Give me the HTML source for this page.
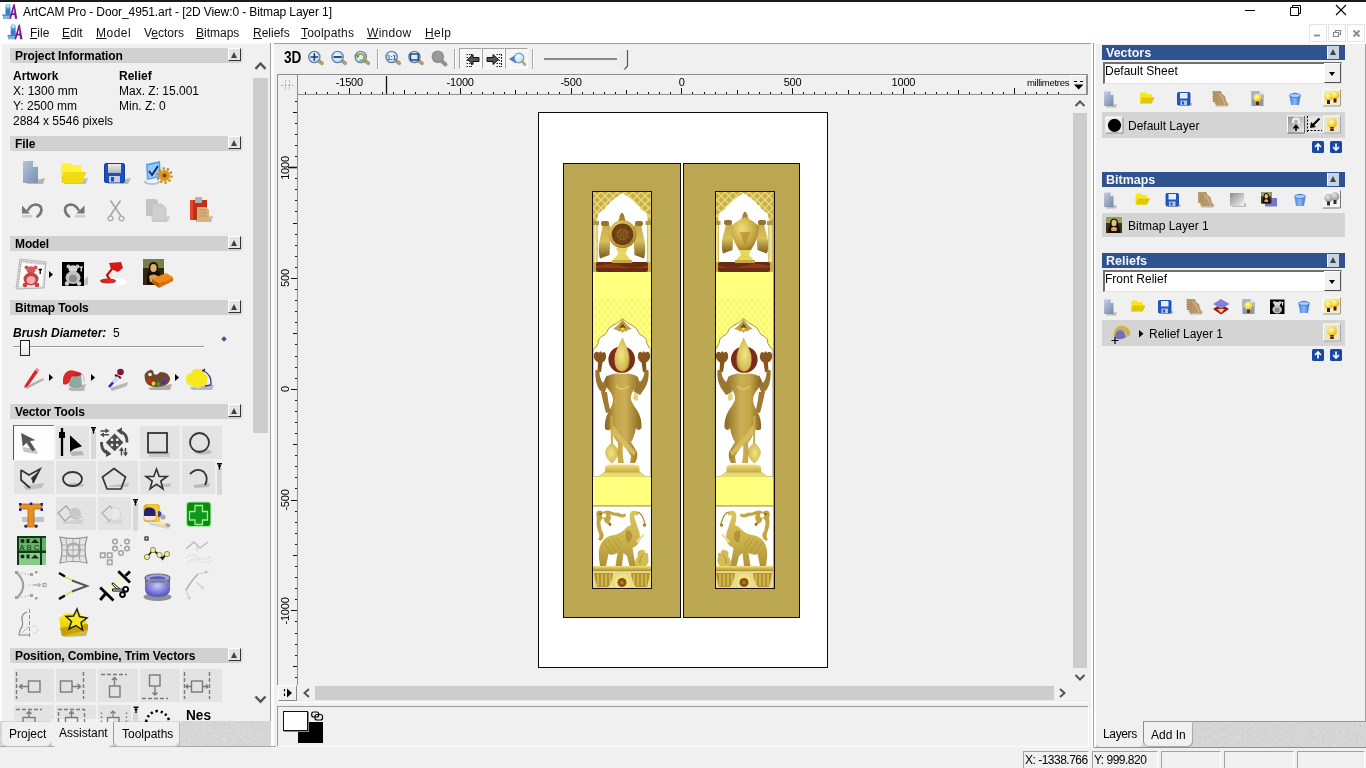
<!DOCTYPE html>
<html><head><meta charset="utf-8">
<style>
*{box-sizing:border-box;margin:0;padding:0}
html,body{width:1366px;height:768px;overflow:hidden;background:#f0f0f0;font-family:"Liberation Sans",sans-serif;font-size:12px;color:#000}
.a{position:absolute}
.t{position:absolute;white-space:nowrap;line-height:1}
#title{left:0;top:0;width:1366px;height:43px;background:#fff}
#topbar{left:0;top:0;width:1366px;height:2px;background:#1b1b1b}
.menu{font-size:12px;top:27px;color:#111}
.menu u{text-decoration-thickness:1px;text-underline-offset:1px}
.hd{position:absolute;left:10px;width:233px;height:15px;background:linear-gradient(90deg,#d6d6d6 0,#d1d1d1 8px,#d1d1d1 231px,#e2e2e2 231px)}
.hd b{position:absolute;left:5px;top:1px;font-size:12px;line-height:14px;white-space:nowrap;letter-spacing:-0.12px}
.cb{position:absolute;width:13px;height:13px;background:#e4e4e4;border-right:1px solid #333;border-bottom:1px solid #333;border-left:1px solid #fff;border-top:1px solid #fff}
.cb:after{content:"";position:absolute;left:2px;top:2.5px;border-left:3.5px solid transparent;border-right:3.5px solid transparent;border-bottom:6.5px solid #3c4444}
.bh{position:absolute;left:1102px;width:243px;height:15px;background:#30538f}
.bh b{position:absolute;left:4px;top:1px;font-size:12.5px;line-height:15px;color:#f4f6fa;white-space:nowrap}
.bh .cb{left:225px;top:1px;background:#c9d3e3;border:none;border-left:1px solid #f0f4fa;width:12px;height:12.5px}
.row{position:absolute;left:1102px;width:243px;height:25px;background:#d4d4d4}
.sel{position:absolute;left:1103px;width:239px;height:22px;background:#fff;border-top:2px solid #707070;border-left:2px solid #707070;border-right:1px solid #e2e2e2;border-bottom:1px solid #e2e2e2}
.sel span{position:absolute;left:0px;top:0px;font-size:12px;line-height:14px}
.sel i{position:absolute;right:0;top:-1px;width:17px;height:20px;background:#f0f0f0;border-right:1px solid #505050;border-bottom:1px solid #505050;border-left:1px solid #fff;border-top:1px solid #fff}
.sel i:after{content:"";position:absolute;left:4px;top:8px;border-left:3.5px solid transparent;border-right:3.5px solid transparent;border-top:4px solid #000}
.tile{position:absolute;width:38px;height:32px;background:#e3e3e3}
</style></head><body><div id="root" style="position:absolute;left:0;top:0;width:1366px;height:768px;will-change:transform;transform:translateZ(0)">
<!-- TITLE + MENU -->
<div id="title" class="a"></div>
<div id="topbar" class="a"></div>
<div class="t" style="left:23px;top:5px;font-size:12px;line-height:15px;color:#000;letter-spacing:-0.1px">ArtCAM Pro - Door_4951.art - [2D View:0 - Bitmap Layer 1]</div>
<div class="t menu" style="left:30px"><u>F</u>ile</div>
<div class="t menu" style="left:62px"><u>E</u>dit</div>
<div class="t menu" style="left:96px;letter-spacing:.5px"><u>M</u>odel</div>
<div class="t menu" style="left:144px">V<u>e</u>ctors</div>
<div class="t menu" style="left:196px"><u>B</u>itmaps</div>
<div class="t menu" style="left:253px"><u>R</u>eliefs</div>
<div class="t menu" style="left:301px;letter-spacing:.2px"><u>T</u>oolpaths</div>
<div class="t menu" style="left:367px;letter-spacing:.3px"><u>W</u>indow</div>
<div class="t menu" style="left:425px;letter-spacing:.4px"><u>H</u>elp</div>
<div class="a" style="left:1365px;top:43px;width:1px;height:679px;background:#a0a0a0"></div>
<!-- FRAMES -->
<div class="a" style="left:0;top:43px;width:1366px;height:1px;background:#fafafa"></div>
<div class="a" style="left:270px;top:43px;width:1px;height:704px;background:#a0a0a0"></div>
<div class="a" style="left:271px;top:43px;width:3px;height:704px;background:#fdfdfd"></div>
<div class="a" style="left:274px;top:43px;width:817px;height:1px;background:#a0a0a0"></div>
<div class="a" style="left:1091px;top:43px;width:2px;height:704px;background:#fdfdfd"></div>
<div class="a" style="left:1093px;top:43px;width:1px;height:704px;background:#a0a0a0"></div>
<div class="a" style="left:1094px;top:43px;width:2px;height:704px;background:#fdfdfd"></div>
<!-- TITLE ICONS -->
<svg class="a" style="left:0;top:0" width="1366" height="44" viewBox="0 0 1366 44">
<defs>
<linearGradient id="lgb" x1="0" y1="0" x2="0" y2="1"><stop offset="0" stop-color="#78c8e8"/><stop offset=".5" stop-color="#3878c8"/><stop offset="1" stop-color="#4090d8"/></linearGradient>
<g id="logo"><path d="M3.200,2Q3.200,0 5.700,0Q8.200,0 8.200,2V10.300H9V12H8.500V15H.8V12.300H0V10.800H3.200Z" fill="url(#lgb)"/><ellipse cx="5.700" cy="2.300" rx="1.500" ry="1.700" fill="#b8ecf8"/><path d="M1,12.600H8.200M1.500,14H8" stroke="#a8dcf0" stroke-width=".8"/><path d="M12.300,0L15,15H12.600L12.200,11.300H9.800L8.600,15H7L11,.8Z" fill="#7a1890"/><path d="M10.300,9.500L11.700,4.500L12,9.500Z" fill="#fff"/></g>
</defs>
<use href="#logo" x="2.300" y="3.700"/>
<use href="#logo" x="7.500" y="24.300"/>
<path d="M1245,10.500H1255" stroke="#000" stroke-width="1"/>
<path d="M1290.500,7.500H1298.500V15.500H1290.500Z M1292.500,7.500V5.500H1300.500V13.500H1298.500" fill="none" stroke="#000" stroke-width="1"/>
<path d="M1336,5L1346,15M1346,5L1336,15" stroke="#000" stroke-width="1.100"/>
<g fill="#fdfdfd" stroke="#e4e4e4" stroke-width="1"><rect x="1309.500" y="24.500" width="17" height="17"/><rect x="1328.500" y="24.500" width="17" height="17"/><rect x="1347.500" y="24.500" width="17" height="17"/></g>
<path d="M1314,35.500H1320" stroke="#8a8a8a" stroke-width="1.800"/>
<path d="M1333.500,32.500H1338.500V36.500H1333.500ZM1335.500,32V30.500H1340.500V34.500H1339" fill="none" stroke="#8a8a8a" stroke-width="1.200"/>
<path d="M1353.500,30.500L1359.500,36.500M1359.500,30.500L1353.500,36.500" stroke="#8a8a8a" stroke-width="1.800"/>
</svg>
<!-- LEFT PANEL -->
<div class="a" style="left:0;top:44px;width:2px;height:703px;background:#fcfcfc"></div>
<div class="hd" style="top:48px"><b>Project Information</b></div><div class="cb" style="left:228px;top:48px"></div>
<div class="hd" style="top:136px"><b>File</b></div><div class="cb" style="left:228px;top:136px"></div>
<div class="hd" style="top:236px"><b>Model</b></div><div class="cb" style="left:228px;top:236px"></div>
<div class="hd" style="top:300px"><b>Bitmap Tools</b></div><div class="cb" style="left:228px;top:300px"></div>
<div class="hd" style="top:404px"><b>Vector Tools</b></div><div class="cb" style="left:228px;top:404px"></div>
<div class="hd" style="top:648px"><b>Position, Combine, Trim Vectors</b></div><div class="cb" style="left:228px;top:648px"></div>
<div class="t" style="left:13px;top:69px;line-height:15px"><b>Artwork</b><br>X: 1300 mm<br>Y: 2500 mm<br>2884 x 5546 pixels</div>
<div class="t" style="left:119px;top:69px;line-height:15px"><b>Relief</b><br>Max. Z: 15.001<br>Min. Z: 0</div>
<div class="t" style="left:13px;top:326px;line-height:14px"><b><i>Brush Diameter:</i></b></div>
<div class="t" style="left:113px;top:326px;line-height:14px">5</div>
<div class="a" style="left:13px;top:346px;width:191px;height:1px;background:#9a9a9a"></div>
<div class="a" style="left:13px;top:347px;width:191px;height:1px;background:#fff"></div>
<div class="a" style="left:20px;top:340px;width:10px;height:16px;background:linear-gradient(#fff,#e8e8e8);border:1px solid #222"></div>
<div class="a" style="left:222px;top:337px;width:4px;height:4px;background:#4a5a7a;transform:rotate(45deg)"></div>
<!-- left scrollbar -->
<div class="a" style="left:253px;top:78px;width:15px;height:355px;background:#cdcdcd"></div>
<svg class="a" style="left:252px;top:56px" width="18" height="654" viewBox="252 56 18 654"><path d="M255.500,68.800 L260.500,63.500 L265.500,68.800" fill="none" stroke="#555" stroke-width="2.500"/><path d="M255.500,696.500 L260.500,701.800 L265.500,696.500" fill="none" stroke="#555" stroke-width="2.500"/></svg>
<!-- tiles -->
<div class="a" style="left:13px;top:425px;width:41px;height:35px;background:#fdfdfd;border-left:1px solid #555;border-top:1px solid #777"></div>
<div class="tile" style="left:56px;top:426px;width:33px;height:33px"></div><div class="a" style="left:91px;top:432px;width:5px;height:27px;background:#d8d8d8"></div>
<div class="tile" style="left:140px;top:426px;width:40px;height:33px"></div>
<div class="tile" style="left:182px;top:426px;width:40px;height:33px"></div>
<div class="tile" style="left:14px;top:461px;width:40px;height:33px"></div>
<div class="tile" style="left:56px;top:461px;width:40px;height:33px"></div>
<div class="tile" style="left:98px;top:461px;width:40px;height:33px"></div>
<div class="tile" style="left:140px;top:461px;width:40px;height:33px"></div>
<div class="tile" style="left:182px;top:461px;width:33px;height:33px"></div><div class="a" style="left:217px;top:468px;width:5px;height:27px;background:#d8d8d8"></div>
<div class="tile" style="left:56px;top:497px;width:40px;height:33px"></div>
<div class="tile" style="left:98px;top:497px;width:33px;height:33px"></div><div class="a" style="left:133px;top:504px;width:5px;height:27px;background:#d8d8d8"></div>
<div class="tile" style="left:14px;top:669px;width:40px;height:33px"></div>
<div class="tile" style="left:56px;top:669px;width:40px;height:33px"></div>
<div class="tile" style="left:98px;top:669px;width:40px;height:33px"></div>
<div class="tile" style="left:140px;top:669px;width:40px;height:33px"></div>
<div class="tile" style="left:182px;top:669px;width:40px;height:33px"></div>
<div class="tile" style="left:14px;top:705px;width:40px;height:20px"></div>
<div class="tile" style="left:56px;top:705px;width:40px;height:20px"></div>
<div class="tile" style="left:98px;top:705px;width:33px;height:20px"></div><div class="a" style="left:133px;top:712px;width:5px;height:12px;background:#d8d8d8"></div>
<!--LEFTICONS-->
<!-- tab strip -->
<div class="a" style="left:0;top:721px;width:271px;height:26px;background:#d9d9d9"></div><svg class="a" style="left:0;top:721px" width="271" height="26"><filter id="nz2"><feTurbulence type="fractalNoise" baseFrequency=".35" numOctaves="2" seed="7"/><feColorMatrix type="matrix" values="0 0 0 0 .5  0 0 0 0 .5  0 0 0 0 .5  0 0 0 1.500 -.5"/></filter><rect width="271" height="26" filter="url(#nz2)" opacity=".4"/></svg>
<div class="a" style="left:0;top:746px;width:276px;height:1px;background:#a8a8a8"></div>
<div class="a" style="left:2px;top:722px;width:49px;height:24px;background:#f0f0f0;border-radius:0 0 5px 5px;box-shadow:1px 1px 0 #bbb"></div>
<div class="a" style="left:113px;top:722px;width:66px;height:24px;background:#f0f0f0;border-radius:0 0 5px 5px;border-left:1px solid #999;box-shadow:1px 1px 0 #bbb"></div>
<div class="a" style="left:51px;top:719px;width:62px;height:28px;background:#f0f0f0;border-radius:0 0 5px 5px"></div>
<div class="t" style="left:9px;top:727px;font-size:12px;line-height:15px">Project</div>
<div class="t" style="left:59px;top:726px;font-size:12px;line-height:15px">Assistant</div>
<div class="t" style="left:122px;top:727px;font-size:12px;line-height:15px">Toolpaths</div>
<!-- LEFT ICONS -->
<svg class="a" style="left:0;top:150px" width="252" height="572" viewBox="0 150 252 572">
<defs>
<filter id="bl" x="-20%" y="-20%" width="140%" height="140%"><feGaussianBlur stdDeviation=".6"/></filter>
<filter id="bl2" x="-30%" y="-30%" width="160%" height="160%"><feGaussianBlur stdDeviation="1.2"/></filter>
<linearGradient id="docg" x1="0" y1="0" x2="1" y2="1"><stop offset="0" stop-color="#b4c4dc"/><stop offset="1" stop-color="#7c8eae"/></linearGradient>
<linearGradient id="yel" x1="0" y1="0" x2="0" y2="1"><stop offset="0" stop-color="#fff020"/><stop offset="1" stop-color="#d8b800"/></linearGradient>
<linearGradient id="gry" x1="0" y1="0" x2="0" y2="1"><stop offset="0" stop-color="#eee"/><stop offset="1" stop-color="#b4b4b4"/></linearGradient>
<radialGradient id="blu" cx=".5" cy=".4" r=".6"><stop offset="0" stop-color="#c8c8ff"/><stop offset="1" stop-color="#5050c0"/></radialGradient>
<path id="tri" d="M0,0V7L4,3.500Z" fill="#000"/>
<g id="pin"><path d="M0,.7H5M2.500,0V6.500M1,3H4" stroke="#000" stroke-width="1.400" fill="none"/></g>
</defs>
<!-- File row 1 -->
<g>
<path d="M27,182L45,178L43,184H27Z" fill="#909090" opacity=".6" filter="url(#bl)"/>
<path d="M23,161H33L38,167V183H23Z" fill="url(#docg)"/><path d="M33,161L38,167H33Z" fill="#e8eef8"/>
<path d="M64,181L88,178L86,184H64Z" fill="#909090" opacity=".5" filter="url(#bl)"/>
<path d="M61,165Q61,163 63,163H70L72,165H79Q81,165 81,168V172H86L82,183H62Z" fill="url(#yel)"/><path d="M64,172H86L82,183H62Z" fill="#f0dc10"/><path d="M61,165Q61,163 63,163H70L72,165H79Q81,165 81,168V172H64L61,181Z" fill="#fff238"/>
<path d="M108,182L131,178L128,184H108Z" fill="#909090" opacity=".6" filter="url(#bl)"/>
<rect x="104.500" y="163.500" width="20" height="19" rx="1.500" fill="#1c50c0" stroke="#1040a0"/><rect x="108" y="164" width="13" height="9" fill="url(#gry)"/><rect x="109" y="176" width="11" height="6.500" fill="#c8d0e0"/><rect x="111" y="177" width="3" height="4.500" fill="#1c50c0"/>
<ellipse cx="152" cy="182" rx="8" ry="3" fill="#b8c0e0"/><ellipse cx="152" cy="181" rx="6" ry="2" fill="#f4f4fc"/>
<path d="M146,164L160,161L161,177L147,180Z" fill="#58a0e0"/><path d="M147.500,165.500L158.500,163L159.500,176L148.500,178.500Z" fill="#90c8f8"/><path d="M149,171L152,175L158,166" stroke="#102080" stroke-width="1.800" fill="none"/>
<circle cx="164.500" cy="175.500" r="5.500" fill="#d89820"/><circle cx="164.500" cy="175.500" r="7" fill="none" stroke="#c88818" stroke-width="2.500" stroke-dasharray="2.200 2.200"/><circle cx="164.500" cy="175.500" r="2" fill="#704808"/>
</g>
<!-- File row 2 -->
<g>
<path d="M22,215H32V217.500H22Z" fill="#c4c4c4" opacity=".8" filter="url(#bl)"/>
<path d="M22,205.500V213.500H30Z" fill="#757575"/><path d="M28,210Q31,204.500 36,204.500Q41.500,205 41.500,210Q41,214 37.500,216.500" fill="none" stroke="#757575" stroke-width="2.600" stroke-linecap="round"/>
<path d="M75,215H85V217.500H75Z" fill="#c4c4c4" opacity=".8" filter="url(#bl)"/>
<path d="M84.500,205.500V213.500H76.500Z" fill="#757575"/><path d="M78.500,210Q75.500,204.500 70.500,204.500Q65,205 65,210Q65.500,214 69,216.500" fill="none" stroke="#757575" stroke-width="2.600" stroke-linecap="round"/>
<path d="M110.500,200.500L121,216M120.500,200.500L110,216" stroke="#a4a4a4" stroke-width="1.500" fill="none"/><ellipse cx="110.500" cy="218.500" rx="2.500" ry="2.200" fill="none" stroke="#a4a4a4" stroke-width="1.200" transform="rotate(-30 110.500 218.500)"/><ellipse cx="121.500" cy="218.500" rx="2.500" ry="2.200" fill="none" stroke="#a4a4a4" stroke-width="1.200" transform="rotate(30 121.500 218.500)"/>
<path d="M152,219L170,216L168,222H152Z" fill="#c0c0c0" opacity=".7" filter="url(#bl)"/>
<path d="M146,199H156L158,201V216H146Z" fill="#c4c4c4"/><path d="M152,204H162L166,208V221H152Z" fill="#cfcfcf" stroke="#bcbcbc" stroke-width=".6"/>
<path d="M196,219L213,216L211,222H196Z" fill="#b0a090" opacity=".7" filter="url(#bl)"/>
<path d="M190,200H207V220H190Z" fill="#c03018"/><path d="M190,200H193V220H190Z" fill="#e04828"/><path d="M195,197H202V203H195Z" fill="#b0b0b8"/><path d="M197,207H206L209,210V221H197Z" fill="#d8b078"/><path d="M199,210H206M199,213H207M199,216H207" stroke="#b89058" stroke-width=".8"/>
</g>
<!-- Model row -->
<g>
<path d="M20,259L46,262L44,288L16,289Z" fill="#e0e0e0" stroke="#a8a8a8" stroke-width=".8"/><path d="M22,263L44,265.500L42,286L19,286.500Z" fill="#fff"/>
<path d="M21,261L45,264M18,287L21,262" stroke="#888" stroke-width="1" stroke-dasharray="1 1.500"/>
<circle cx="26.500" cy="267.500" r="2" fill="#d05050"/><circle cx="35.500" cy="267.500" r="2" fill="#d05050"/><ellipse cx="31" cy="270" rx="4.500" ry="3.800" fill="#d85858"/>
<ellipse cx="31" cy="279" rx="7.500" ry="6.500" fill="#c84040"/><ellipse cx="31" cy="280" rx="4.500" ry="4" fill="#f0b0b0"/><circle cx="25" cy="285" r="2.300" fill="#c84040"/><circle cx="37" cy="285" r="2.300" fill="#c84040"/>
<path d="M38.500,269.500H42M40.200,269.500V274" stroke="#000" stroke-width="1.300"/>
<use href="#tri" x="49" y="271"/>
<path d="M84,280L88,276V285H84Z" fill="#a0a0a0" opacity=".6"/>
<rect x="62" y="262" width="22" height="24" fill="#000"/>
<circle cx="68.500" cy="266.500" r="2" fill="#c8c8c8"/><circle cx="77.500" cy="266.500" r="2" fill="#c8c8c8"/><ellipse cx="73" cy="269" rx="4.500" ry="3.800" fill="#d8d8d8"/>
<ellipse cx="73" cy="277.500" rx="7.500" ry="6.500" fill="#c4c4c4"/><ellipse cx="73" cy="278.500" rx="4" ry="3.800" fill="#8c8c8c"/><circle cx="67" cy="283.500" r="2.200" fill="#d0d0d0"/><circle cx="79" cy="283.500" r="2.200" fill="#d0d0d0"/>
<path d="M79.500,267H83M81.200,267V271.500" stroke="#fff" stroke-width="1.200"/>
<ellipse cx="115" cy="282" rx="12" ry="3.500" fill="#fff" filter="url(#bl)"/><ellipse cx="108" cy="281" rx="8" ry="2.500" fill="#d02020" filter="url(#bl)"/>
<path d="M109,263L121,262L123,268L118,272L111,269Z" fill="#d81818"/><path d="M112,269L107,275L110,280" stroke="#c01010" stroke-width="2.200" fill="none"/><ellipse cx="110" cy="281" rx="5" ry="2" fill="#e02828"/>
<rect x="143" y="259" width="21" height="26" fill="#302810"/><path d="M143,259H164V268H143Z" fill="#788048"/><path d="M147,285Q146,274 149,270Q148,262 153.500,262Q159,262 158,270Q161,274 160,285Z" fill="#181008"/><ellipse cx="153.500" cy="268" rx="3.200" ry="4" fill="#e0b070"/><path d="M149,276Q153.500,273 158,276L157,282H150Z" fill="#d0a060"/>
<path d="M152,279L166,273L173,277L159,284Z" fill="#f08818"/><path d="M152,279L159,284V288L152,283Z" fill="#b85c08"/><path d="M159,284L173,277V281L159,288Z" fill="#d87410"/>
</g>
<!-- Bitmap tools row -->
<g>
<path d="M25,387L43,378L44,380L27,389Z" fill="#a0a0a0" opacity=".8" filter="url(#bl)"/>
<path d="M25,385L35,370L38,372L28,386L24,388Z" fill="#e02030"/><path d="M35,370L36.500,368L39.500,370L38,372Z" fill="#f08088"/>
<use href="#tri" x="49" y="374"/>
<path d="M68,388L86,384L84,391H70Z" fill="#909090" opacity=".6" filter="url(#bl)"/>
<path d="M69,374L81,373L82,386Q76,390 69,386Z" fill="#90a8a0"/><ellipse cx="75" cy="374" rx="6.500" ry="2.500" fill="#c82020"/><path d="M63,384Q62,374 68,371Q74,369 78,373Q72,374 70,380Q68,386 63,384Z" fill="#d82828"/><path d="M79,372Q85,374 84,382" stroke="#b0b8b8" stroke-width="1" fill="none"/>
<use href="#tri" x="91" y="374"/>
<path d="M110,388L128,382L127,386L112,391Z" fill="#a0a0a0" opacity=".7" filter="url(#bl)"/>
<circle cx="120.500" cy="372" r="3.300" fill="#801838"/><path d="M115,375L121,378" stroke="#601028" stroke-width="2"/><path d="M117,378L109,387" stroke="#2030b0" stroke-width="2.600"/><path d="M118,377L113,382.500" stroke="#e0e8ff" stroke-width="2.400"/>
<path d="M148,388L172,384L170,390H150Z" fill="#808080" opacity=".6" filter="url(#bl)"/>
<path d="M145,380Q143,372 150,370Q153,369 154,374Q157,376 160,372Q170,372 170,380Q168,387 156,387Q147,387 145,380Z" fill="#704828"/><circle cx="150" cy="374.500" r="1.800" fill="#f0f0f0"/>
<circle cx="149" cy="381" r="1.900" fill="#e02020"/><circle cx="153.500" cy="383.500" r="1.900" fill="#f0d020"/><circle cx="158.500" cy="384" r="1.900" fill="#30a030"/><circle cx="163.500" cy="382.500" r="1.900" fill="#2040d0"/><circle cx="166" cy="378" r="1.700" fill="#8030a0"/>
<use href="#tri" x="175" y="374"/>
<path d="M190,387L214,385L212,390H192Z" fill="#9090a8" opacity=".6" filter="url(#bl)"/>
<path d="M186,379Q186,373 192,373Q193,368 199,369Q204,369 205,374Q209,376 207,381Q208,386 202,386Q198,390 193,386Q186,386 186,379Z" fill="#f8e820"/>
<path d="M202,370Q212,374 211,385L205,386" stroke="#303890" stroke-width="1.300" fill="none"/><path d="M203,371L205,369" stroke="#111" stroke-width="1.200"/>
</g>
<!-- Vector tools row1 -->
<g>
<path d="M22,447L36,449L38,454L24,452Z" fill="#b0b0b0" opacity=".7" filter="url(#bl)"/>
<path d="M21.500,433.500L23,446L26.500,442.500L32.500,451L35,449.500L29.500,441L34.500,440Z" fill="#555" stroke="#3a3a3a" stroke-width=".5"/>
<path d="M70,452L82,451L84,455L72,456Z" fill="#a8a8a8" opacity=".8" filter="url(#bl)"/>
<path d="M62,428V456" stroke="#000" stroke-width="2.300"/><rect x="59" y="432" width="6" height="6" fill="#000"/>
<path d="M70,435.200V452L74,449L82,446.300Z" fill="#000"/>
<use href="#pin" x="91" y="427"/>
<path d="M114.600,433.600L123.400,442.400L114.600,451.200L105.800,442.400Z" fill="#4a4a4a"/><g fill="#f4f4f4"><rect x="110.800" y="438.600" width="2.400" height="2.400"/><rect x="116" y="438.600" width="2.400" height="2.400"/><rect x="110.800" y="443.800" width="2.400" height="2.400"/><rect x="116" y="443.800" width="2.400" height="2.400"/></g>
<path d="M127,442.500Q127.500,434 120.500,431.500" fill="none" stroke="#4a4a4a" stroke-width="2.800"/><path d="M116.500,430.500L122,427.500V435Z" fill="#4a4a4a"/>
<path d="M101.500,442Q101,450.500 107.500,453" fill="none" stroke="#4a4a4a" stroke-width="2.800"/><path d="M111.500,454L106,457V449.500Z" fill="#4a4a4a"/>
<path d="M100.500,431H106.500M103,434.800H109" stroke="#4a4a4a" stroke-width="1.500"/><path d="M105.500,428.300L109.500,431L105.500,433.300Z M104,432.500L100,434.800L104,437.300Z" fill="#4a4a4a"/>
<path d="M121.500,450V455.500M125.500,448V453.500" stroke="#4a4a4a" stroke-width="1.500"/><path d="M119,451L121.500,447L124,451Z M123,452.500L125.500,456.500L128,452.500Z" fill="#4a4a4a"/>
<path d="M149,452H170V457H149Z" fill="#c4c4c4" opacity=".8" filter="url(#bl)"/>
<rect x="148" y="433" width="19" height="19.500" fill="none" stroke="#333" stroke-width="1.800"/>
<ellipse cx="203" cy="452" rx="9" ry="2.500" fill="#bdbdbd" filter="url(#bl)"/>
<circle cx="199.500" cy="442.500" r="9.500" fill="none" stroke="#333" stroke-width="1.800"/>
</g>
<!-- row2 -->
<g>
<path d="M23,486L44,483L42,488L26,490Z" fill="#bdbdbd" opacity=".9" filter="url(#bl)"/>
<path d="M21,470L29,475L40,469L33,483M21,470V480L30,488" fill="none" stroke="#333" stroke-width="1.700"/><path d="M40,469L32,484L34.500,479Z" fill="#333"/><path d="M38,472L33,483L31,478Z" fill="#333"/>
<ellipse cx="75" cy="485" rx="9" ry="2.200" fill="#bdbdbd" filter="url(#bl)"/>
<ellipse cx="72.500" cy="479" rx="9.500" ry="7" fill="none" stroke="#333" stroke-width="1.800"/>
<path d="M108,486L129,483L128,487H110Z" fill="#bdbdbd" opacity=".9" filter="url(#bl)"/>
<path d="M114,468.500L125.500,477L121,489H107L102.500,477Z" fill="none" stroke="#333" stroke-width="1.700"/>
<path d="M150,486L171,483L170,487H152Z" fill="#bdbdbd" opacity=".9" filter="url(#bl)"/>
<path d="M156.500,469L159.200,476.500H167L160.800,481L163,489L156.500,484.200L150,489L152.200,481L146,476.500H153.800Z" fill="none" stroke="#333" stroke-width="1.600"/>
<path d="M193,485L210,483L209,487L195,488Z" fill="#b4b4b4" opacity=".9" filter="url(#bl)"/>
<path d="M190,474Q197,467 204,472Q209,478 205,485" fill="none" stroke="#333" stroke-width="1.800"/>
<use href="#pin" x="217" y="463"/>
</g>
<!-- row3 -->
<g>
<path d="M22,517H44V522H22Z" fill="#b8b8b8" opacity=".8" filter="url(#bl)"/>
<path d="M20,504H42V509H34V525H37V527H25V525H28V509H20Z" fill="#e89020" stroke="#a05808" stroke-width=".7"/>
<g fill="#1818a0"><rect x="19" y="503" width="2.500" height="2.500"/><rect x="40.500" y="503" width="2.500" height="2.500"/><rect x="19" y="508.500" width="2.500" height="2.500"/><rect x="40.500" y="508.500" width="2.500" height="2.500"/><rect x="24.500" y="525" width="2.500" height="2.500"/><rect x="35" y="525" width="2.500" height="2.500"/><rect x="29.800" y="502.500" width="2.500" height="2.500"/></g>
<path d="M62,522L84,519L82,524H64Z" fill="#cfcfcf" opacity=".9" filter="url(#bl)"/>
<path d="M58,513L66,506L73,514L65,521Z" fill="none" stroke="#a8a8a8" stroke-width="1.300"/><ellipse cx="75" cy="513" rx="6" ry="5" fill="#c8c8c8"/><path d="M70,516Q76,522 82,516" stroke="#b0b0b0" fill="none"/>
<path d="M104,522L124,519L122,524H106Z" fill="#d6d6d6" opacity=".9" filter="url(#bl)"/>
<path d="M102,513L110,506L117,514L109,521Z" fill="none" stroke="#b4b4b4" stroke-width="1.300"/><path d="M112,508Q121,506 121,516Q119,522 111,520" fill="#e8e8e8" stroke="#d0d0d0"/>
<use href="#pin" x="133" y="499"/>
<path d="M147,522L168,526L169,529L150,525Z" fill="#c8c8c8" opacity=".7" filter="url(#bl)"/>
<path d="M156,519.500L170,524.500L169,527L155,522.500Z" fill="#f4e890"/><path d="M166,523L170.500,524.500L169.500,527.500L165.500,526Z" fill="#a0a0a0"/>
<rect x="143.500" y="504" width="16.500" height="18" rx="3.500" fill="#e8b020"/><path d="M146,504.500H156Q160,505 160,509V518Q160,522 156,522Z" fill="#f0c838"/>
<path d="M144,512Q144,507.500 149,507.500Q155,507.500 155.500,512V516H144Z" fill="#282068"/><path d="M144,516H155.500V518Q155,520.500 150,520.500Q144.500,520.500 144,518Z" fill="#f0e0e4"/>
<path d="M158,511Q161.500,511 161.500,514Q161.500,517 158,517Z" fill="#4838a0"/><circle cx="163" cy="517" r="2.600" fill="#a8a8a8"/>
<rect x="186.500" y="502" width="24.500" height="24.500" rx="3" fill="#0c8a0c" stroke="#a8f0a8" stroke-width="1.200"/>
<path d="M195,505.500H202.500V511.500H207.500V520H202.500V524.500H195V520H189.500V511.500H195Z" fill="#12981a" stroke="#98f098" stroke-width="1.300"/>
</g>
<!-- row4 -->
<g>
<rect x="17" y="536" width="29" height="29" fill="#0c3c14"/><rect x="19" y="538" width="21" height="12.500" fill="#68b068"/><rect x="19" y="553" width="21" height="12" fill="#88c888"/><rect x="42" y="538" width="4" height="12.500" fill="#68b068"/><rect x="42" y="553" width="4" height="12" fill="#88c888"/>
<circle cx="22.500" cy="541" r="2" fill="#082808"/><rect x="26.500" y="539" width="3" height="4" fill="#082808"/><path d="M31,543L35,539L39,543Z" fill="#082808"/>
<text x="19.500" y="550" font-size="7.500" font-family="Liberation Sans" fill="#0c3010" textLength="20">ABC</text>
<circle cx="22.500" cy="556.500" r="2" fill="#0c3010"/><rect x="26.500" y="554.500" width="3" height="4" fill="#0c3010"/><path d="M31,558.500L35,554.500L39,558.500Z" fill="#0c3010"/>
<path d="M60,537Q73,540 87,537Q83,550 87,563Q73,560 60,563Q64,550 60,537Z" fill="#e4e4e4" stroke="#909090" stroke-width="1.200"/><path d="M66,538.500Q69,550 66,561.500M73,539V561M80,538.500Q77,550 80,561.500M62,545H85M62.500,550H84.500M62,556H85" stroke="#a0a0a0" stroke-width=".9" fill="none"/><circle cx="73.500" cy="550" r="6.500" fill="none" stroke="#a8a8a8" stroke-width="2"/>
<g fill="none" stroke="#a0a0a0" stroke-width="1.500"><rect x="100.500" y="553" width="4.500" height="4.500"/><rect x="107.500" y="553" width="4.500" height="4.500"/><rect x="107.500" y="560" width="4.500" height="4.500"/><circle cx="115" cy="541.500" r="2.300"/><circle cx="127" cy="541.500" r="2.300"/><circle cx="115" cy="548.500" r="2.300"/><circle cx="127" cy="548.500" r="2.300"/><circle cx="121" cy="553" r="2.300"/></g><circle cx="121" cy="545.500" r="1" fill="#a0a0a0"/>
<rect x="145" y="537" width="3" height="3" fill="#fff" stroke="#000" stroke-width="1"/>
<path d="M147,557L153,550L159,555L162,558L167,554" fill="none" stroke="#222" stroke-width="1.800"/>
<g fill="#f0f0a0" stroke="#606020" stroke-width=".7"><circle cx="147" cy="557" r="2.600"/><circle cx="153" cy="550" r="2.600"/><circle cx="159.500" cy="555" r="2.600"/><circle cx="167" cy="554" r="2.600"/></g>
<path d="M160,557L162.500,560.500L165,557Z" fill="#222"/>
<path d="M186,549L194,542L200,548L208,542" fill="none" stroke="#b8b8b8" stroke-width="1.300"/><path d="M186,558Q192,552 198,557T211,556M188,562Q195,557 201,561T212,560" fill="none" stroke="#dcdcdc" stroke-width="1.500" stroke-dasharray="2 1.500"/><path d="M197,544V551" stroke="#c8c8c8"/>
</g>
<!-- row5 -->
<g>
<path d="M16,572Q30,585 17,598" fill="none" stroke="#a0a0a0" stroke-width="2.200"/><path d="M17,572L31,575M17,598L31,595M28,585H44" stroke="#c0c0c0" stroke-width="1" stroke-dasharray="2 1.500"/>
<g fill="#a0a0a0"><rect x="15" y="571" width="3" height="3"/><rect x="15" y="596" width="3" height="3"/><rect x="30" y="573" width="3" height="3"/><rect x="30" y="594" width="3" height="3"/><rect x="35" y="571" width="2.500" height="2.500"/><rect x="35" y="597" width="2.500" height="2.500"/></g><rect x="43" y="583.500" width="3" height="3" fill="none" stroke="#a0a0a0"/><path d="M33,585H40M38,583L40.500,585L38,587" stroke="#a0a0a0" fill="none"/>
<path d="M59,573L65,576.500M59,599L65,595.500" stroke="#000" stroke-width="2.300"/><path d="M65,576.500L72,580.500M65,595.500L72,591.500" stroke="#f0f0a0" stroke-width="2.600"/><path d="M65,576.500L72,580.500M65,595.500L72,591.500" stroke="#808040" stroke-width=".8" stroke-dasharray="1 1.500"/><path d="M72,580.500L87,586L72,591.500" fill="none" stroke="#555" stroke-width="2"/>
<path d="M108,591.500L123,577" stroke="#f4f8c0" stroke-width="3.200"/><path d="M118.300,571.300L130,582.500M125.500,575.700L130,571.500" stroke="#000" stroke-width="2.800"/><path d="M100.200,587.500L113.500,600.500M105.700,593.500L100.200,600" stroke="#000" stroke-width="2.800"/>
<path d="M112.800,582.800L120.800,589.800L118.800,591L111.800,584Z" fill="#fff" stroke="#000" stroke-width="1"/><path d="M112.500,589H122.500V591H112.500Z" fill="#fff" stroke="#000" stroke-width="1"/><circle cx="125.700" cy="589.300" r="2.400" fill="#fff" stroke="#000" stroke-width="1.900"/><circle cx="122.500" cy="594.600" r="2.400" fill="#fff" stroke="#000" stroke-width="1.900"/>
<ellipse cx="157.500" cy="597" rx="14" ry="4" fill="#909090" filter="url(#bl)"/>
<path d="M145,578V590Q146,597 157.500,597Q169,597 170,590V578Z" fill="url(#blu)"/><ellipse cx="157.500" cy="578" rx="12.500" ry="4" fill="#a0a0e8" stroke="#707080" stroke-width="1.200"/><ellipse cx="157.500" cy="578.500" rx="8" ry="2.200" fill="#5858b8"/><path d="M146,584Q152,578 157.500,580Q163,578 169,584" fill="none" stroke="#909868" stroke-width="1.300"/>
<path d="M186,590Q192,580 198,574" fill="none" stroke="#b0b0b0" stroke-width="1.600"/><path d="M198,574L208,572M186,590L189,598M196,582L203,588" fill="none" stroke="#d4d4d4" stroke-width="1.200"/><path d="M205,570.500L209,572L205,574Z M187.500,598L190,600L190.500,596Z M201,588.500L204,589L202.500,586Z" fill="#c4c4c4"/>
</g>
<!-- row6 -->
<g>
<path d="M29.500,609V638" stroke="#909090" stroke-width="1" stroke-dasharray="4 2"/><path d="M27,612Q21,614 22,620Q24,625 20,630L19,635H29" fill="none" stroke="#888" stroke-width="1.200"/><path d="M32,626Q37,624 38,630Q37,634 33,633" fill="none" stroke="#d8d8d8" stroke-width="1"/><path d="M22,633L29,626" stroke="#b0b0b0"/>
<path d="M62,634L88,630L86,636L64,637Z" fill="#a09060" opacity=".6" filter="url(#bl)"/>
<path d="M59,618L66,613H80L86,620L88,628L84,634L62,636Z" fill="url(#yel)"/><path d="M60,628L88,624V630L62,636Z" fill="#c8a000"/>
<path d="M77,609L79.500,616.500L87,618L81,622.500L82.500,630L76,625.500L69,629L71.500,621.500L66,616.500L73.500,616Z" fill="#f8e820" stroke="#222" stroke-width="1.500"/>
</g>
<!-- Position tools -->
<g stroke="#7a7a7a" fill="none" stroke-width="1.400">
<path d="M16.500,672V699" stroke-dasharray="4 2"/><rect x="28.500" y="681" width="11.500" height="11"/><path d="M19.500,686.500H28M22.500,684L19.500,686.500L22.500,689"/>
<rect x="60.500" y="681" width="11.500" height="11"/><path d="M83.500,672V699" stroke-dasharray="4 2"/><path d="M72,686.500H80.500M77.500,684L80.500,686.500L77.500,689"/>
<path d="M101,674.500H127" stroke-dasharray="4 2"/><rect x="109.500" y="686" width="10.500" height="11"/><path d="M114.500,685V677.500M112,680L114.500,677.500L117,680"/>
<rect x="149.500" y="675" width="10.500" height="11"/><path d="M142,698.500H168" stroke-dasharray="4 2"/><path d="M155,687V695M152.500,692.500L155,695L157.500,692.500"/>
<path d="M184.500,672V699M209.500,672V699" stroke-dasharray="4 2"/><rect x="191.500" y="681" width="11" height="11"/><path d="M186,686.500H191M203,686.500H208M188,684.500L186,686.500L188,688.500M206,684.500L208,686.500L206,688.500"/>
<path d="M16,709.500H42" stroke-dasharray="4 2"/><path d="M29,717V711.500M26.500,714L29,711.500L31.500,714"/><rect x="23" y="717.500" width="12" height="8"/>
<path d="M58.500,722V709.500H84.500V722" stroke-dasharray="4 2"/><path d="M71.500,717V711.500M69,714L71.500,711.500L74,714"/><rect x="65.500" y="717.500" width="12" height="8"/>
<path d="M101.500,722V710M126.500,722V710" stroke-dasharray="1.500 2.500"/><path d="M113,717V711M110.500,713.500L113,711L115.500,713.500" stroke-width="1.100"/><rect x="107.500" y="717.500" width="11.500" height="8"/>
</g>
<use href="#pin" x="133.500" y="706.500"/>
<path d="M146,722Q148,712.500 157,711Q166,711.500 169,720" fill="none" stroke="#000" stroke-width="2.600" stroke-dasharray="2.200 2.800"/>
<text x="186" y="720.300" font-size="14.500" font-weight="bold" font-family="Liberation Sans" fill="#000" textLength="25" lengthAdjust="spacingAndGlyphs">Nes</text><text x="186" y="731.500" font-size="14.500" font-weight="bold" font-family="Liberation Sans" fill="#000" textLength="25" lengthAdjust="spacingAndGlyphs">Nes</text>

</svg>
<!-- CENTER -->
<div class="t" style="left:283.8px;top:50.3px;font-size:16px;line-height:16px;font-weight:bold;transform:scaleX(.85);transform-origin:0 0">3D</div>
<div class="a" style="left:377px;top:49px;width:1px;height:20px;background:#a8a8a8"></div><div class="a" style="left:378px;top:49px;width:1px;height:20px;background:#fff"></div>
<div class="a" style="left:454px;top:49px;width:1px;height:20px;background:#a8a8a8"></div><div class="a" style="left:455px;top:49px;width:1px;height:20px;background:#fff"></div>
<div class="a" style="left:532px;top:49px;width:1px;height:20px;background:#a8a8a8"></div><div class="a" style="left:533px;top:49px;width:1px;height:20px;background:#fff"></div>
<div class="a" style="left:459px;top:48px;width:23px;height:21px;background:#f6f6f6;border:1px solid #a4a4a4;border-right-color:#fcfcfc;border-bottom-color:#fcfcfc"></div>
<div class="a" style="left:482px;top:48px;width:23px;height:21px;background:#f6f6f6;border:1px solid #a4a4a4;border-right-color:#fcfcfc;border-bottom-color:#fcfcfc"></div>
<div class="a" style="left:505px;top:48px;width:23px;height:21px;background:#f6f6f6;border:1px solid #a4a4a4;border-right-color:#fcfcfc;border-bottom-color:#fcfcfc"></div>
<div class="a" style="left:544px;top:58px;width:73px;height:2px;background:#8a8a8a"></div>
<svg class="a" style="left:620px;top:48px" width="12" height="22" viewBox="620 48 12 22"><path d="M618,50.500H627.500V66L624.500,69.500H618Z" fill="#ededed"/><path d="M627.500,50V66L624.500,69.500" fill="none" stroke="#555" stroke-width="1.200"/></svg>
<div class="a" style="left:277px;top:74px;width:811px;height:21px;border:1px solid #8e8e8e;border-bottom-color:#8e8e8e;background:#f0f0f0"></div>
<div class="a" style="left:277px;top:94px;width:21px;height:591px;border-left:1px solid #8e8e8e;border-right:1px solid #8e8e8e;background:#f0f0f0"></div>
<div class="a" style="left:297px;top:74px;width:1px;height:21px;background:#8e8e8e"></div>
<svg class="a" style="left:0;top:0" width="1366" height="768" viewBox="0 0 1366 768"><path d="M305.1,94V92 M316.2,94V92 M327.2,94V92 M338.3,94V92 M349.4,94V88 M360.5,94V92 M371.6,94V92 M382.6,94V92 M393.7,94V92 M404.8,94V90 M415.9,94V92 M427.0,94V92 M438.0,94V92 M449.1,94V92 M460.2,94V88 M471.3,94V92 M482.4,94V92 M493.4,94V92 M504.5,94V92 M515.6,94V90 M526.7,94V92 M537.8,94V92 M548.8,94V92 M559.9,94V92 M571.0,94V88 M582.1,94V92 M593.2,94V92 M604.2,94V92 M615.3,94V92 M626.4,94V90 M637.5,94V92 M648.6,94V92 M659.6,94V92 M670.7,94V92 M681.8,94V88 M692.9,94V92 M704.0,94V92 M715.0,94V92 M726.1,94V92 M737.2,94V90 M748.3,94V92 M759.4,94V92 M770.4,94V92 M781.5,94V92 M792.6,94V88 M803.7,94V92 M814.8,94V92 M825.8,94V92 M836.9,94V92 M848.0,94V90 M859.1,94V92 M870.2,94V92 M881.2,94V92 M892.3,94V92 M903.4,94V88 M914.5,94V92 M925.6,94V92 M936.6,94V92 M947.7,94V92 M958.8,94V90 M969.9,94V92 M981.0,94V92 M992.0,94V92 M1003.1,94V92 M1014.2,94V88 M1025.3,94V92 M1036.4,94V92 M1047.4,94V92 M1058.5,94V92 M297,677.3H295 M297,666.2H293 M297,655.1H295 M297,644.0H295 M297,633.0H295 M297,621.9H295 M297,610.8H291 M297,599.7H295 M297,588.6H295 M297,577.6H295 M297,566.5H295 M297,555.4H293 M297,544.3H295 M297,533.2H295 M297,522.2H295 M297,511.1H295 M297,500.0H291 M297,488.9H295 M297,477.8H295 M297,466.8H295 M297,455.7H295 M297,444.6H293 M297,433.5H295 M297,422.4H295 M297,411.4H295 M297,400.3H295 M297,389.2H291 M297,378.1H295 M297,367.0H295 M297,356.0H295 M297,344.9H295 M297,333.8H293 M297,322.7H295 M297,311.6H295 M297,300.6H295 M297,289.5H295 M297,278.4H291 M297,267.3H295 M297,256.2H295 M297,245.2H295 M297,234.1H295 M297,223.0H293 M297,211.9H295 M297,200.8H295 M297,189.8H295 M297,178.7H295 M297,167.6H291 M297,156.5H295 M297,145.4H295 M297,134.4H295 M297,123.3H295 M297,112.2H293 M297,101.1H295" stroke="#111" stroke-width="1" fill="none" shape-rendering="crispEdges"/>
<path d="M386.5,76V94" stroke="#111" stroke-width="1.3"/><path d="M288,167.5H297" stroke="#111" stroke-width="1.6"/>
<path d="M281,85.500H294M285.500,80V91M289.500,80V91" stroke="#b0b0b0" stroke-width="1" stroke-dasharray="2 1.500"/>
</svg>
<div class="t" style="left:319.4px;top:76px;width:60px;text-align:center;font-size:11px;line-height:12px;letter-spacing:-0.2px">-1500</div>
<div class="t" style="left:430.2px;top:76px;width:60px;text-align:center;font-size:11px;line-height:12px;letter-spacing:-0.2px">-1000</div>
<div class="t" style="left:541.0px;top:76px;width:60px;text-align:center;font-size:11px;line-height:12px;letter-spacing:-0.2px">-500</div>
<div class="t" style="left:651.8px;top:76px;width:60px;text-align:center;font-size:11px;line-height:12px;letter-spacing:-0.2px">0</div>
<div class="t" style="left:762.6px;top:76px;width:60px;text-align:center;font-size:11px;line-height:12px;letter-spacing:-0.2px">500</div>
<div class="t" style="left:873.4px;top:76px;width:60px;text-align:center;font-size:11px;line-height:12px;letter-spacing:-0.2px">1000</div>
<div class="t" style="left:255.0px;top:161.6px;width:60px;height:12px;text-align:center;font-size:11px;line-height:12px;letter-spacing:-0.2px;transform:rotate(-90deg)">1000</div>
<div class="t" style="left:255.0px;top:272.4px;width:60px;height:12px;text-align:center;font-size:11px;line-height:12px;letter-spacing:-0.2px;transform:rotate(-90deg)">500</div>
<div class="t" style="left:255.0px;top:383.2px;width:60px;height:12px;text-align:center;font-size:11px;line-height:12px;letter-spacing:-0.2px;transform:rotate(-90deg)">0</div>
<div class="t" style="left:255.0px;top:494.0px;width:60px;height:12px;text-align:center;font-size:11px;line-height:12px;letter-spacing:-0.2px;transform:rotate(-90deg)">-500</div>
<div class="t" style="left:255.0px;top:604.8px;width:60px;height:12px;text-align:center;font-size:11px;line-height:12px;letter-spacing:-0.2px;transform:rotate(-90deg)">-1000</div>
<div class="t" style="left:1027px;top:77px;font-size:9.5px;line-height:11px;letter-spacing:-0.3px">millimetres</div>
<div class="a" style="left:1070px;top:75px;width:17px;height:19px;background:#f0f0f0;border-left:1px solid #fff;border-top:1px solid #fff;border-right:1px solid #8e8e8e"></div>
<svg class="a" style="left:1070px;top:75px" width="17" height="19" viewBox="1070 75 17 19"><path d="M1074,81.500H1077M1080,81.500H1083" stroke="#000" stroke-width="1.200"/><path d="M1074,84.500H1083.500L1078.700,89.500Z" fill="#000"/></svg>
<div class="a" style="left:1072px;top:95px;width:16px;height:590px;background:#f0f0f0"></div>
<div class="a" style="left:1073px;top:113px;width:14px;height:555px;background:#cdcdcd"></div>
<svg class="a" style="left:1072px;top:95px" width="16" height="590" viewBox="1072 95 16 590"><path d="M1075.500,106 L1080,101.500 L1084.500,106" fill="none" stroke="#555" stroke-width="2"/><path d="M1075.500,675 L1080,679.500 L1084.500,675" fill="none" stroke="#555" stroke-width="2"/></svg>
<div class="a" style="left:278px;top:685px;width:19px;height:16px;background:#f0f0f0;border:1px solid #fff;border-right-color:#8a8a8a;border-bottom-color:#8a8a8a"></div>
<svg class="a" style="left:278px;top:685px" width="19" height="16" viewBox="278 685 19 16"><path d="M284.500,689V697" stroke="#000" stroke-width="1.200" stroke-dasharray="2.500 2"/><path d="M287,688.500V697.500L292,693Z" fill="#000"/></svg>
<div class="a" style="left:315px;top:686px;width:739px;height:14px;background:#cdcdcd"></div>
<svg class="a" style="left:298px;top:685px" width="780" height="16" viewBox="298 685 780 16"><path d="M309,689 L304.500,693 L309,697" fill="none" stroke="#555" stroke-width="2"/><path d="M1060,689 L1064.500,693 L1060,697" fill="none" stroke="#555" stroke-width="2"/></svg>
<div class="a" style="left:277px;top:702px;width:811px;height:1px;background:#fff"></div>
<div class="a" style="left:277px;top:706px;width:811px;height:1px;background:#9c9c9c"></div>
<div class="a" style="left:277px;top:707px;width:1px;height:40px;background:#9c9c9c"></div>
<div class="a" style="left:277px;top:746px;width:811px;height:1px;background:#fcfcfc"></div>
<div class="a" style="left:1088px;top:707px;width:1px;height:40px;background:#fcfcfc"></div>
<div class="a" style="left:298px;top:722px;width:25px;height:21px;background:#000"></div>
<div class="a" style="left:283px;top:711px;width:25px;height:20px;background:#fff;border:1px solid #111;box-shadow:1px 1px 0 #888"></div>
<svg class="a" style="left:310px;top:710px" width="14" height="12" viewBox="310 710 14 12"><rect x="311.700" y="712" width="7" height="5" rx="2" fill="none" stroke="#000" stroke-width="1.200"/><rect x="315" y="714.500" width="7.500" height="5.500" rx="2" fill="none" stroke="#000" stroke-width="1.200"/></svg>
<!-- TOOLBAR ICONS -->
<svg class="a" style="left:300px;top:45px" width="340" height="28" viewBox="300 45 340 28">
<defs>
<radialGradient id="lens" cx=".4" cy=".35" r=".7"><stop offset="0" stop-color="#eefaff"/><stop offset="1" stop-color="#b4dcf0"/></radialGradient>
<g id="mag"><path d="M5,4.300L7.600,6.200" stroke="#b89868" stroke-width="3.800" stroke-linecap="round"/><circle cx="0" cy="0" r="5.600" fill="url(#lens)" stroke="#6484ac" stroke-width="1.400"/></g>
</defs>
<use href="#mag" x="314.300" y="57"/><path d="M310.500,57H318.100M314.300,53.200V60.800" stroke="#203870" stroke-width="1.600"/>
<use href="#mag" x="337.600" y="57"/><path d="M333.500,57H341.700" stroke="#203870" stroke-width="1.800"/>
<use href="#mag" x="360.700" y="57"/><path d="M357.500,56Q358,53.500 361.500,54Q365,55 364,58.500Q363,61 359.500,60.500" fill="none" stroke="#98a020" stroke-width="1.700"/><path d="M356,54.500L359.800,55.800L357,58.800Z" fill="#889018"/>
<use href="#mag" x="391.600" y="57"/><text x="386.800" y="60" font-size="7.500" font-weight="bold" font-family="Liberation Sans" fill="#4c6c94" textLength="9.600">1:1</text>
<use href="#mag" x="414.400" y="57"/><rect x="410.500" y="54" width="7.800" height="6" fill="none" stroke="#284880" stroke-width="1.500"/>
<circle cx="437.800" cy="56.800" r="6.300" fill="#909090"/><path d="M441,60.500L445.500,64.500" stroke="#909090" stroke-width="4" stroke-linecap="round"/><circle cx="437.800" cy="56.800" r="4.500" fill="#9a9a9a"/>
<!-- buttons -->
<g stroke="#222" stroke-width="1"><path d="M466.500,54.500H471M466.500,57.500H469M466.500,60.500H469M466.500,63.500H471M466.500,66.500H471" stroke-dasharray="1.500 1"/><path d="M471.500,54V67" stroke-dasharray="2 1"/></g>
<path d="M467.500,59.500L473,54.500V57.500H479V61.500H473V64.500Z" fill="#555" stroke="#111" stroke-width="1"/>
<g stroke="#222" stroke-width="1"><path d="M496.500,54.500H501M498.500,57.500H501M498.500,60.500H501M496.500,63.500H501M496.500,66.500H501" stroke-dasharray="1.500 1"/><path d="M501.500,54V67" stroke-dasharray="2 1"/></g>
<path d="M498.500,59.500L493,54.500V57.500H487V61.500H493V64.500Z" fill="#555" stroke="#111" stroke-width="1"/>
<path d="M509,59L516,54.500V63.500Z" fill="#5078c0"/><circle cx="519" cy="58" r="4.800" fill="url(#lens)" stroke="#7c9cc4" stroke-width="1.300"/><path d="M522,61.500L525,64.500" stroke="#c0a078" stroke-width="2.600" stroke-linecap="round"/>
</svg>
<!-- ARTWORK -->
<svg class="a" style="left:530px;top:105px" width="310" height="570" viewBox="530 105 310 570">
<defs>
<linearGradient id="gv" x1="0" y1="0" x2="1" y2="0"><stop offset="0" stop-color="#8e6c1e"/><stop offset=".45" stop-color="#e6d468"/><stop offset="1" stop-color="#9a7622"/></linearGradient>
<linearGradient id="gh" x1="0" y1="0" x2="0" y2="1"><stop offset="0" stop-color="#f0e27a"/><stop offset="1" stop-color="#a88428"/></linearGradient>
<radialGradient id="gr" cx=".4" cy=".35" r=".8"><stop offset="0" stop-color="#f0e078"/><stop offset=".6" stop-color="#c4a440"/><stop offset="1" stop-color="#86621a"/></radialGradient>
<radialGradient id="gr2" cx=".45" cy=".5" r=".6"><stop offset="0" stop-color="#f2e486"/><stop offset=".7" stop-color="#d8c058"/><stop offset="1" stop-color="#b09038"/></radialGradient>
<linearGradient id="gb" x1="0" y1="0" x2="1" y2="0"><stop offset="0" stop-color="#86621e"/><stop offset=".3" stop-color="#c4a448"/><stop offset=".55" stop-color="#cdb055"/><stop offset="1" stop-color="#8a6822"/></linearGradient>
<linearGradient id="ge" x1="0" y1="0" x2="0" y2="1"><stop offset="0" stop-color="#dcc65c"/><stop offset=".5" stop-color="#ccb44c"/><stop offset="1" stop-color="#b09438"/></linearGradient>
<linearGradient id="gt" x1="0" y1="0" x2="0" y2="1"><stop offset="0" stop-color="#c8aa48"/><stop offset=".5" stop-color="#d8c05c"/><stop offset="1" stop-color="#7a5a1c"/></linearGradient>
<linearGradient id="gcol" x1="0" y1="0" x2="1" y2="0"><stop offset="0" stop-color="#c8b050"/><stop offset=".5" stop-color="#f8f0b0"/><stop offset="1" stop-color="#d0b858"/></linearGradient>
<radialGradient id="gc" cx=".5" cy=".5" r=".5"><stop offset="0" stop-color="#a87a2a"/><stop offset=".35" stop-color="#7a4c14"/><stop offset="1" stop-color="#6a3c10"/></radialGradient>
<pattern id="lat" x="593" y="300" width="6" height="8" patternUnits="userSpaceOnUse"><path d="M0,4L3,0L6,4L3,8Z" fill="none" stroke="#f4ee74" stroke-width=".8"/></pattern>
<pattern id="spd" x="593" y="192" width="8" height="8" patternUnits="userSpaceOnUse"><rect width="8" height="8" fill="#c8ae48"/><path d="M0,0L8,8M8,0L0,8" stroke="#e8da78" stroke-width="1.500"/></pattern>
<g id="panelbase">
 <!-- top arch segment -->
 <rect x="593" y="192" width="58" height="71" fill="url(#spd)"/>
 <path d="M597.500,263V219Q597,214 600,212Q603,210.500 604.500,209Q605,206 608,205Q611,201 614,199Q618,196 622.500,193Q627,196 631,199Q634,201 637,205Q640,206 640.500,209Q642,210.500 645,212Q648,214 647.500,219V263Z" fill="#fff"/>
 <rect x="593" y="222" width="4.500" height="41" fill="url(#gcol)"/><rect x="647" y="222" width="4" height="41" fill="url(#gcol)"/><rect x="593" y="221" width="6" height="4" fill="#b8983c"/><rect x="645.500" y="221" width="5.500" height="4" fill="#b8983c"/>
 <rect x="593" y="262" width="58" height="10" fill="#c8ae48"/><rect x="596" y="262" width="52" height="10" rx="2" fill="#6c2a12"/><path d="M596,266Q610,262 622,266T648,265V268H596Z" fill="#8a3c1c"/>
 <!-- yellow band -->
 <rect x="593" y="272" width="58" height="80" fill="#ffff7e"/>
 <rect x="593" y="299" width="58" height="50" fill="url(#lat)"/>
 <!-- goddess bg -->
 <path d="M593,477V349.500Q596,348 598,343.500Q598,338 601.500,336.500Q605,335.500 606.500,332.500Q608,327.500 612,326Q618,323 622.500,318.500Q627,323 633,326Q637,327.500 638.500,332.500Q640,335.500 643.500,336.500Q647,338 647,343.500Q649,348 651,349.500V477Z" fill="#fff" stroke="#9a8a38" stroke-width=".9"/>
 <path d="M613,329Q618,326 622.500,319Q627,326 632,329Q628,329 626,331.500Q624,330 622.500,333Q621,330 619,331.500Q617,329 613,329Z" fill="#c4a03c"/><path d="M619,328.500L622.500,323L626,328.500Q622.500,326.500 619,328.500Z" fill="#7a5216"/><circle cx="622.500" cy="329" r="1.300" fill="#f0e080"/>
 <!-- halo + head -->
 <circle cx="621.700" cy="359.500" r="13.300" fill="#7c2c18"/>
 <path d="M622.500,337.500Q626.500,345 629,354Q630.500,362 628,367.500Q625.500,371.500 622,371.500Q618.500,371.500 616,367.500Q613.500,362 615,354Q618,345 622.500,337.500Z" fill="url(#gr2)"/>
 <!-- lotus flowers -->
 <path d="M594,354Q596,350 599,353Q600,349.500 602,353Q605,350 606,355Q607,360 602.500,362.500L601,372H597.500L598,362.500Q593,360 594,354Z" fill="#87561c"/>
 <path d="M638,354Q640,350 642,353Q644,349.500 645,353Q648,350 650,354Q651,360 646,362.500L646.500,372H643L641.500,362.500Q637,360 638,354Z" fill="#87561c"/>
 <!-- arms -->
 <path d="M595.500,370Q594.500,382 599.500,390L604,394L609,382L607,375L603,383Q599,378 599.500,370Z" fill="#9c7630"/>
 <path d="M648.500,370Q649.500,380 645,388L640,395L634,392L636,376L640,382Q644.500,378 644.500,370Z" fill="#9c7630"/>
 <path d="M601,392Q603,402 606,413L610.500,412Q608,402 607,392Z" fill="#a07a30"/>
 <!-- torso + hips + legs -->
 <path d="M606,377Q613,372 622,374Q631,372 638,377Q640,383 635,389Q630,394 631,400Q633,405 637,410Q642,418 641.500,428Q638,432 636,428Q634,438 631,442L637,452Q638,458 635,463H630L631,456L623,444Q622,452 624,463H618Q617,452 618,443Q612,436 612,428Q609,432 605,429Q604,420 609,411Q613,405 613,399Q612,393 608,389Q604,384 606,377Z" fill="url(#gb)"/>
 <path d="M613,425Q620,436 636,452L634,456Q620,444 610,430Z" fill="#d8c060" opacity=".85"/>
 <path d="M616,386Q622,392 629,386" fill="none" stroke="#e0cc70" stroke-width="1.200"/><path d="M635,392Q639,394 638,400Q635,402 633,398Z" fill="#e4d27a"/>
 <path d="M610.500,416H612.500L613,444H611Z" fill="#c8ac48"/>
 <path d="M611.700,442.500Q618.500,448 618.500,453Q617,459 611.700,463.500Q606.500,459 605,453Q605,448 611.700,442.500Z" fill="url(#gr2)"/>
 <path d="M598,477L605,471.500V467Q606,464.500 612,464.500H633Q639,464.500 639.500,467V471.500L646.500,477Z" fill="url(#gh)"/><path d="M598,477L604,472.500H641L646.500,477Z" fill="#e8dc6c"/>
 <!-- lower yellow band -->
 <rect x="593" y="477" width="58" height="29" fill="#ffff7e"/><rect x="593" y="505.500" width="58" height="1" fill="#8a7a30"/>
 <!-- elephant segment -->
 <rect x="593" y="506.500" width="58" height="81" fill="#fff"/>
 <path d="M597,511.500Q600,509.500 603,512Q606,509.500 610,511Q614,513.500 618,512.500Q622,515.500 626,513.500L625.500,516.500Q621,518.500 617,516Q613,515.500 610,514.500Q612,518.500 609.500,521L611,525L607.500,524Q604,522.500 603.500,518Q600,519.500 600.500,524Q601,530 603.500,534Q604.500,538 600.500,541L598,539.500Q600.500,536.500 598.500,532Q595.500,524 597,518Q595.500,514 597,511.500Z" fill="#c4a440"/>
 <circle cx="604" cy="515.500" r="2.200" fill="#fff"/><circle cx="600.500" cy="514" r="1.300" fill="#8a6a20"/><circle cx="610" cy="524.500" r="1.400" fill="#8a6a20"/>
 <path d="M600,566L599,558Q598,548 602,542Q606,536 614,535Q620,534 624,530Q627,526 631,525Q629,518 630,513.500Q632,509 636,511Q639,513 637.500,516Q635,514 634,516Q636,522 637.500,527Q640,532 640,537Q640,543 636,546L632.500,548L634,557L636,566H629.500L627,556L623.500,553L622,566H615.500L617.500,553Q612,556 608.500,554L606,566Z" fill="url(#ge)"/>
 <path d="M604,543L612,554M608,540L616,552M612,538L620,549M616,537L622,545" stroke="#a88c34" stroke-width=".8" opacity=".8"/>
 <path d="M626,531Q631,529 632,535Q632,541 628,543Q625,539 626,531Z" fill="#b09438"/>
 <path d="M636,541L643.500,533.500L644.500,535L638,543Z" fill="#e8dc98"/>
 <path d="M637,512Q641,513 643,518L645,523.500" fill="none" stroke="#b09438" stroke-width="1.300"/><circle cx="644.500" cy="525" r="1.800" fill="#a08430"/>
 <path d="M636,566Q634,560 638,556Q636,551 641,550Q645,549 645,553Q649,552 648,557Q650,562 646,566Z" fill="#d4bc54"/><path d="M640,564Q639,558 643,555" fill="none" stroke="#a88c34" stroke-width=".9"/>
 <rect x="593" y="566" width="58" height="5.500" fill="url(#gh)"/>
 <rect x="593" y="571.500" width="58" height="16.500" fill="#e8dc8c"/>
 <path d="M594,573H613Q612,582 608,587H597Q595,580 594,573Z" fill="#b4922e"/><path d="M631,573H650Q649,580 647,587H636Q632,582 631,573Z" fill="#b4922e"/>
 <path d="M598,574V586M602,574V586M606,574V586M610,574V584M634,574V584M638,574V586M642,574V586M646,574V586" stroke="#e2cc64" stroke-width="1.200"/>
 <circle cx="622" cy="582" r="7.500" fill="#f2e67a"/><circle cx="622" cy="582.500" r="4.500" fill="#8a5418"/><circle cx="622" cy="582.500" r="1.800" fill="#b8782c"/>
</g>
</defs>
<rect x="538.500" y="112.500" width="289" height="555" fill="#fff" stroke="#0a0a0a" stroke-width="1"/>
<rect x="563.500" y="163.500" width="117" height="454" fill="#bba652" stroke="#120c04" stroke-width="1"/>
<rect x="683.500" y="163.500" width="116" height="454" fill="#bba652" stroke="#120c04" stroke-width="1"/>
<use href="#panelbase"/>
<use href="#panelbase" transform="translate(1366,0) scale(-1,1)"/>
<!-- left motif: chakra -->
<path d="M603,224Q608,222 610,226Q610.500,240 609.500,255L600,258.500Q597.500,250 600,238Q602,230 603,224Z" fill="url(#gt)"/>
<path d="M641,224Q636,222 634,226Q633.500,240 634.500,255L644,258.500Q646.500,250 644,238Q642,230 641,224Z" fill="url(#gt)"/>
<rect x="601" y="221" width="8" height="5" rx="2" fill="#96722a"/><rect x="635" y="221" width="8" height="5" rx="2" fill="#96722a"/>
<path d="M622,212.500Q625,215 624.500,218L626,221.500H618L619.500,218Q619,215 622,212.500Z" fill="#a67e2c"/>
<circle cx="622.500" cy="234.300" r="14" fill="url(#gr)"/><circle cx="622.500" cy="234.300" r="10.800" fill="url(#gc)"/><circle cx="622.500" cy="234.300" r="5" fill="none" stroke="#9a6a24" stroke-width="1.200"/><path d="M622.500,224V244.600M612.200,234.300H632.800M615.200,227L629.800,241.600M629.800,227L615.200,241.600" stroke="#5e3610" stroke-width=".7" opacity=".7"/>
<path d="M616,248H628L625.500,254Q630,258 632,262.500H612Q614,258 618.500,254Z" fill="#e6d660"/><path d="M612,260H632V263H612Z" fill="#c8a844"/>
<!-- right motif: conch/urn -->
<path d="M726,224Q731,222 733,226Q733.500,238 732.500,250L723,253.500Q720.500,246 723,236Q725,230 726,224Z" fill="url(#gt)"/>
<path d="M764,224Q759,222 757,226Q756.500,238 757.500,250L767,253.500Q769.500,246 767,236Q765,230 764,224Z" fill="url(#gt)"/>
<rect x="724" y="220" width="8" height="5" rx="2" fill="#96722a"/><rect x="758" y="220" width="8" height="5" rx="2" fill="#96722a"/>
<path d="M745,211.500Q748,214 747.500,217L749,219.500H741L742.500,217Q742,214 745,211.500Z" fill="#a67e2c"/>
<path d="M731,226Q738,220 745,217Q752,220 759,226Q759,238 751,250H739Q731,238 731,226Z" fill="url(#gr)"/><path d="M740,232H750L745,246Z" fill="#b08c34" opacity=".7"/>
<path d="M739,250H751L749,255Q753,258 755,262.500H735Q737,258 741,255Z" fill="#e6d660"/><path d="M735,260H755V263H735Z" fill="#c8a844"/>
<!-- inner borders -->
<rect x="592.500" y="191.500" width="59" height="397" fill="none" stroke="#1a0a04" stroke-width="1"/>
<rect x="715.500" y="191.500" width="59" height="397" fill="none" stroke="#1a0a04" stroke-width="1"/>
</svg>
<!-- RIGHT PANEL -->
<div class="bh" style="top:45px"><b>Vectors</b><div class="cb"></div></div>
<div class="sel" style="top:62px"><span>Default Sheet</span><i></i></div>
<div class="row" style="top:112px;height:26px"></div>
<div class="t" style="left:1128px;top:119px;font-size:12px;line-height:15px">Default Layer</div>
<div class="bh" style="top:172px"><b>Bitmaps</b><div class="cb"></div></div>
<div class="row" style="top:213px;height:24px"></div>
<div class="t" style="left:1128px;top:219px;font-size:12px;line-height:15px">Bitmap Layer 1</div>
<div class="bh" style="top:253px"><b>Reliefs</b><div class="cb"></div></div>
<div class="sel" style="top:270px"><span>Front Relief</span><i></i></div>
<div class="row" style="top:320px;height:26px"></div>
<div class="t" style="left:1149px;top:327px;font-size:12px;line-height:15px">Relief Layer 1</div>
<!--RIGHTICONS-->
<!-- right tab strip -->
<div class="a" style="left:1096px;top:722px;width:270px;height:25px;background:#d8d8d8"></div><svg class="a" style="left:1096px;top:722px" width="270" height="25"><filter id="nz"><feTurbulence type="fractalNoise" baseFrequency=".35" numOctaves="2" seed="3"/><feColorMatrix type="matrix" values="0 0 0 0 .5  0 0 0 0 .5  0 0 0 0 .5  0 0 0 1.500 -.5"/></filter><rect width="270" height="25" filter="url(#nz)" opacity=".4"/></svg>
<div class="a" style="left:1096px;top:721px;width:270px;height:1px;background:#989898"></div>
<div class="a" style="left:1094px;top:747px;width:272px;height:1px;background:#909090"></div>
<div class="a" style="left:1143px;top:722px;width:49px;height:24px;background:#f0f0f0;border-left:1px solid #8c8c8c;border-radius:0 0 5px 5px;box-shadow:1px 1px 0 #aaa"></div>
<div class="a" style="left:1096px;top:720px;width:47px;height:27px;background:#f0f0f0;border-radius:0 0 5px 5px"></div>
<div class="t" style="left:1103px;top:727px;font-size:12px;line-height:15px;letter-spacing:-0.35px">Layers</div>
<div class="t" style="left:1151px;top:728px;font-size:12px;line-height:15px">Add In</div>
<!-- STATUS -->
<div class="a" style="left:0;top:748px;width:1366px;height:20px;background:#f0f0f0"></div>
<div class="a" style="left:1023px;top:751px;width:66px;height:18px;border:1px solid #a2a2a2;border-right-color:#fff"></div>
<div class="a" style="left:1092px;top:751px;width:66px;height:18px;border:1px solid #a2a2a2;border-right-color:#fff"></div>
<div class="a" style="left:1161px;top:751px;width:60px;height:18px;border:1px solid #a2a2a2;border-right-color:#fff"></div>
<div class="a" style="left:1224px;top:751px;width:70px;height:18px;border:1px solid #a2a2a2;border-right-color:#fff"></div>
<div class="a" style="left:1297px;top:751px;width:68px;height:18px;border:1px solid #a2a2a2;border-right-color:#fff"></div>
<div class="t" style="left:1025px;top:753px;font-size:12px;line-height:14px;letter-spacing:-0.5px">X: -1338.766</div>
<div class="t" style="left:1094px;top:753px;font-size:12px;line-height:14px;letter-spacing:-0.5px">Y: 999.820</div>
<!-- RIGHT ICONS -->
<svg class="a" style="left:1098px;top:86px" width="250" height="280" viewBox="1098 86 250 280">
<defs>
<linearGradient id="rdoc" x1="0" y1="0" x2="1" y2="1"><stop offset="0" stop-color="#c4d0e4"/><stop offset="1" stop-color="#7484a4"/></linearGradient>
<linearGradient id="rbin" x1="0" y1="0" x2="1" y2="0"><stop offset="0" stop-color="#4888e0"/><stop offset=".5" stop-color="#88b8f8"/><stop offset="1" stop-color="#3870c8"/></linearGradient>
<linearGradient id="rgr" x1="0" y1="0" x2="1" y2="1"><stop offset="0" stop-color="#8c8c8c"/><stop offset="1" stop-color="#f4f4f4"/></linearGradient>
<radialGradient id="bulb" cx=".4" cy=".35" r=".7"><stop offset="0" stop-color="#fffad0"/><stop offset=".6" stop-color="#f8d830"/><stop offset="1" stop-color="#e0a810"/></radialGradient>
<radialGradient id="gbulb" cx=".4" cy=".35" r=".7"><stop offset="0" stop-color="#e8e8e8"/><stop offset="1" stop-color="#8c8c8c"/></radialGradient>
<g id="rnew"><path d="M2,15L13,12.500L12,16H2Z" fill="#999" opacity=".6"/><path d="M0,0H6.500L9.500,3.500V14.500H0Z" fill="url(#rdoc)"/><path d="M6.500,0L9.500,3.500H6.500Z" fill="#eef2fa"/></g>
<g id="rfold"><path d="M1,3Q1,1.500 2.500,1.500H6.500L8,3H11.500Q13,3 13,5V6.500H15.500L12.500,12.500H1Z" fill="#f8e818"/><path d="M3,6.500H15.500L12.500,12.500H1Z" fill="#e0c808"/></g>
<g id="rsave"><path d="M3,13.500L15,11V14H3Z" fill="#999" opacity=".6"/><rect x=".5" y=".5" width="12.500" height="12.500" rx="1" fill="#1c58c8" stroke="#1040a0" stroke-width=".8"/><rect x="3" y="1" width="7.500" height="5.500" fill="#e8ecf4"/><rect x="3.500" y="8.500" width="6.500" height="4.500" fill="#b8c8e0"/><rect x="5" y="9.500" width="2" height="3" fill="#1c58c8"/></g>
<g id="rbrown"><path d="M3,14L17,12L16,15.500H4Z" fill="#a09080" opacity=".6"/><path d="M1,0H9L10,3L13,5L14,9L16,14H4L3,11H1Z" fill="#b89868"/><path d="M1,0V11M3,2V13M5,3V14" stroke="#a08050" stroke-width=".8" stroke-dasharray="1.500 1"/><path d="M7,3L10,6L12,10L13,14" stroke="#cdb088" stroke-width="1.500" fill="none"/></g>
<g id="rbulbdoc"><path d="M0,0H8L12,3.500V15H0Z" fill="#8898b0"/><path d="M0,0H8L12,3.500V8H0Z" fill="#a8b4c8"/><circle cx="6" cy="7" r="4.200" fill="url(#bulb)"/><rect x="4.500" y="10.500" width="3" height="3.500" fill="#503010"/><path d="M8,0L12,3.500H8Z" fill="#e8ecf4"/></g>
<g id="rbinn"><path d="M0,2.500L1.500,12H9.500L11,2.500Z" fill="url(#rbin)"/><ellipse cx="5.500" cy="2.500" rx="5.500" ry="2" fill="#a8d0ff" stroke="#3870c8" stroke-width=".8"/><path d="M3.500,1L5.500,0L7.500,1" stroke="#3870c8" fill="none" stroke-width=".8"/></g>
<g id="r2bulb"><rect x="0" y="0" width="17.500" height="16.500" fill="#f4ecd0"/><path d="M0,16.500V0H17.500" fill="none" stroke="#fff" stroke-width="1"/><path d="M17.500,0V16.500H0" fill="none" stroke="#a09880" stroke-width="1"/><circle cx="5.500" cy="7" r="4.300" fill="url(#bulb)"/><rect x="4" y="10.500" width="3" height="4" fill="#402008"/><circle cx="12" cy="5.500" r="4.300" fill="url(#bulb)"/><rect x="10.500" y="9" width="3" height="4" fill="#402008"/></g>
<g id="r1bulb"><rect x="0" y="0" width="17" height="17" fill="#ebe4cc"/><path d="M0,17V0H17" fill="none" stroke="#fff" stroke-width="1"/><path d="M17,0V17H0" fill="none" stroke="#a8a8a8" stroke-width="1"/><circle cx="8.500" cy="7" r="4.800" fill="url(#bulb)"/><rect x="6.800" y="11" width="3.400" height="4" fill="#402008"/><path d="M6.800,12.500H10.200" stroke="#c08020" stroke-width=".8"/></g>
<g id="rup"><rect x="0" y="0" width="12" height="12" rx="1.500" fill="#1848a4"/><path d="M6,9.500V3.500M3,6L6,3L9,6" fill="none" stroke="#fff" stroke-width="1.700"/></g>
<g id="rdn"><rect x="0" y="0" width="12" height="12" rx="1.500" fill="#1848a4"/><path d="M6,2.500V8.500M3,6L6,9L9,6" fill="none" stroke="#fff" stroke-width="1.700"/></g>
<g id="mona"><rect x="0" y="0" width="16" height="16" fill="#3c3418"/><rect x="0" y="0" width="16" height="6" fill="#98a060"/><path d="M2,16Q2,10 4,8Q3.500,1.500 8,1.500Q12.500,1.500 12,8Q14,10 14,16Z" fill="#181008"/><ellipse cx="8" cy="6" rx="2.500" ry="3.200" fill="#e8c080"/><path d="M5,11Q8,9 11,11L10.500,14H5.500Z" fill="#d8a868"/></g>
<g id="teddyb"><rect x="0" y="0" width="14.500" height="14.500" fill="#000"/><circle cx="4.500" cy="3" r="1.500" fill="#c8c8c8"/><circle cx="10" cy="3" r="1.500" fill="#c8c8c8"/><ellipse cx="7.200" cy="4.800" rx="3" ry="2.500" fill="#d8d8d8"/><ellipse cx="7.200" cy="10" rx="4.800" ry="4" fill="#c0c0c0"/><ellipse cx="7.200" cy="10.500" rx="2.500" ry="2.300" fill="#888"/><path d="M11.500,3H13.500M12.500,3V6" stroke="#fff" stroke-width=".9"/></g>
</defs>
<use href="#rnew" x="1104" y="91.5"/>
<use href="#rfold" x="1139" y="91"/>
<use href="#rsave" x="1177" y="92"/>
<use href="#rbrown" x="1212" y="91"/>
<use href="#rbulbdoc" x="1251.5" y="91"/>
<use href="#rbinn" x="1289.5" y="93"/>
<use href="#r2bulb" x="1323" y="89.5"/>
<rect x="1106" y="117" width="17" height="16" fill="#ececec"/><path d="M1106,133V117H1123" fill="none" stroke="#fff"/><path d="M1123,117V133H1106" fill="none" stroke="#8c8c8c"/><circle cx="1114.500" cy="125.300" r="6.600" fill="#000"/>
<rect x="1287.500" y="116" width="17" height="17" fill="url(#rgr)"/><path d="M1287.500,133V116H1304.500" fill="none" stroke="#fff"/><path d="M1304.500,116V133H1287.500" fill="none" stroke="#666"/><path d="M1293,123V121Q1293,118.500 1296,118.500Q1299,118.500 1299,121V124" fill="none" stroke="#f4f4f4" stroke-width="1.800"/><path d="M1296,131V126M1293.500,128.500L1296,125.500L1298.500,128.500" stroke="#000" stroke-width="1.600" fill="none"/>
<rect x="1307" y="116" width="15.500" height="17" fill="#e4e4e4"/><path d="M1307.500,116V133M1307,130.500H1322" stroke="#000" stroke-width="1" stroke-dasharray="2 1.500"/><path d="M1319.500,118.500L1312,126" stroke="#000" stroke-width="2.200"/><path d="M1310,128L1311,122L1316,127Z" fill="#000"/>
<use href="#r1bulb" x="1323.5" y="116"/>
<use href="#rup" x="1312" y="141"/>
<use href="#rdn" x="1330" y="141"/>
<use href="#rnew" x="1104" y="192.5"/>
<use href="#rfold" x="1134.5" y="192"/>
<use href="#rsave" x="1165.5" y="193"/>
<use href="#rbrown" x="1197.5" y="192"/>
<path d="M1232,206L1246,203V207H1233Z" fill="#999" opacity=".6"/><rect x="1230" y="193" width="14" height="13" fill="url(#rgr)"/>
<rect x="1265" y="198" width="12" height="8.500" fill="#7878c8"/><g transform="translate(1261,192) scale(.66,.72)"><use href="#mona"/></g>
<use href="#rbinn" x="1294.5" y="194"/>
<rect x="1323" y="190.500" width="17.500" height="17.500" fill="#f6f6f6"/><path d="M1340.500,190.500V208H1323" fill="none" stroke="#777"/><circle cx="1328.500" cy="198" r="4.300" fill="url(#gbulb)"/><rect x="1327" y="201.500" width="3" height="4" fill="#303030"/><circle cx="1335" cy="196.500" r="4.300" fill="url(#gbulb)"/><rect x="1333.500" y="200" width="3" height="4" fill="#303030"/>
<g transform="translate(1106,217)"><use href="#mona"/></g>
<use href="#rnew" x="1104" y="299.5"/>
<use href="#rfold" x="1130" y="299"/>
<use href="#rsave" x="1158" y="300"/>
<use href="#rbrown" x="1186" y="299"/>
<path d="M1213,309L1221,304L1229,309L1221,314.500Z" fill="#a01010"/><path d="M1217,309H1225L1221,313Z" fill="#f8d040"/><path d="M1213,304L1221,299L1229.500,304L1221,309Z" fill="#8080d8"/>
<use href="#rbulbdoc" x="1242.5" y="299"/>
<g transform="translate(1270,299.500)"><use href="#teddyb"/></g>
<use href="#rbinn" x="1298.5" y="301"/>
<use href="#r2bulb" x="1323" y="297.5"/>
<path d="M1113,336Q1113,326 1122,325Q1130,326 1131,334L1127,337Q1126,331 1120,331Q1116,332 1116,338Z" fill="#c8b060"/><path d="M1113,336Q1113,326 1122,325Q1130,326 1131,334" fill="none" stroke="#e8d890" stroke-width="1.200"/><path d="M1115,338Q1115,331 1120,330Q1125,331 1126,337Q1121,341 1115,338Z" fill="#7070b8"/><path d="M1111.500,340.500H1118.500M1115,337V344" stroke="#000" stroke-width="1.200"/>
<path d="M1139,330V337.500L1143.500,333.700Z" fill="#000"/>
<use href="#r1bulb" x="1323.5" y="324"/>
<use href="#rup" x="1312" y="349"/>
<use href="#rdn" x="1330" y="349"/>
</svg>

</div></body></html>
